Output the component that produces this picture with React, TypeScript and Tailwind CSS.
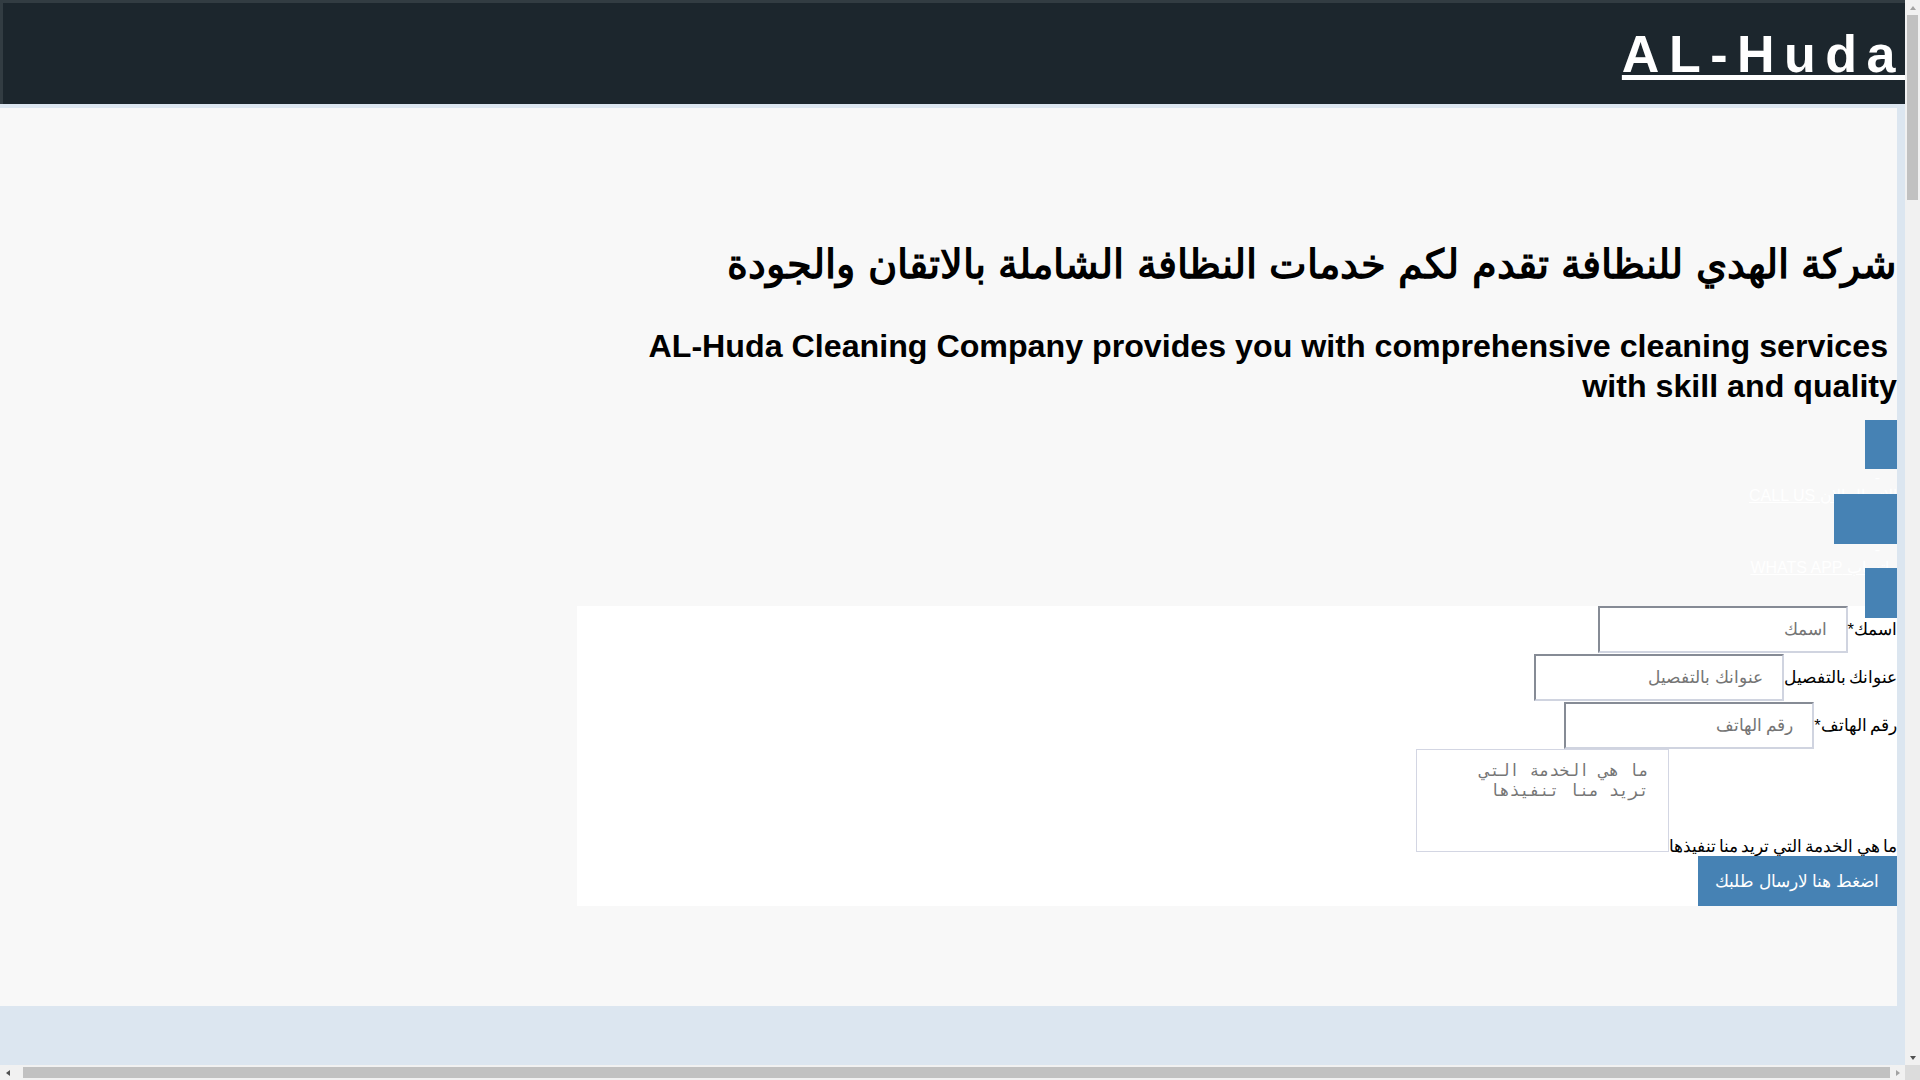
const fields = [
  { id: "name", label: "اسمك*", placeholder: "اسمك" },
  { id: "address", label: "عنوانك بالتفصيل", placeholder: "عنوانك بالتفصيل" },
  { id: "phone", label: "رقم الهاتف*", placeholder: "رقم الهاتف" },
];

const Arrow = ({ dir, active }: { dir: "up" | "down" | "left" | "right"; active: boolean }) => {
  const points = {
    up: "1,6 4,2 7,6",
    down: "1,2 4,6 7,2",
    left: "6,1 2,4 6,7",
    right: "2,1 6,4 2,7",
  }[dir];
  return (
    <div className="flex h-[15px] w-[15px] shrink-0 items-center justify-center">
      <svg width="8" height="8" viewBox="0 0 8 8">
        <polygon points={points} fill={active ? "#505050" : "#a3a3a3"} />
      </svg>
    </div>
  );
};

const ContactLinks = () => {
  return (
    <div className="flex flex-col items-start text-base leading-[18px] text-white">
      <div className="h-[49px] w-[32px] bg-[#4682b4]" />
      <div className="pr-[17px]">-</div>
      <a href="#" className="underline">
        الاتصال الان CALL US
      </a>
      <div className="-mt-[11px] -mb-[3px] h-[50px] w-[63px] bg-[#4682b4]" />
      <div className="pr-[17px]">-</div>
      <a href="#" className="underline">
        واتساب WHATS APP
      </a>
      <div className="relative z-10 -mt-[9px] h-[50px] w-[32px] bg-[#4682b4]" />
    </div>
  );
};

const OrderForm = () => {
  return (
    <form className="-mt-[12px] w-[1320px] bg-white text-base text-black" onSubmit={(e) => e.preventDefault()}>
      {fields.map((f) => (
        <div key={f.id} className="mb-px">
          <label htmlFor={f.id} className="text-[16.5px] leading-[19px] [word-spacing:-1.2px]">
            {f.label}
          </label>
          <input
            id={f.id}
            type="text"
            placeholder={f.placeholder}
            className="inline-block h-[47px] w-[250px] border-2 border-t-[#868b95] border-l-[#868b95] border-r-[#d0d4e0] border-b-[#d0d4e0] bg-white px-[19px] align-baseline text-[16.5px] leading-[19px] placeholder:text-[#757575]"
          />
        </div>
      ))}
      <div className="-mt-px h-[107px]">
        <label htmlFor="service" className="text-[16.5px] leading-[19px] [word-spacing:-1.2px]">
          ما هي الخدمة التي تريد منا تنفيذها
        </label>
        <textarea
          id="service"
          placeholder="ما هي الخدمة التي تريد منا تنفيذها"
          className="inline-block h-[103px] w-[253px] resize-none border border-[#d3d6e3] bg-white pt-[11px] pr-[19px] pb-[12px] pl-[19px] align-baseline font-['DejaVu_Sans_Mono',monospace] text-[16.5px] leading-[19.5px] placeholder:text-[#757575]"
        />
      </div>
      <button
        type="submit"
        className="h-[50px] w-[199px] whitespace-nowrap bg-[#4682b4] px-[18px] text-[16.5px] leading-[19px] text-white"
      >
        اضغط هنا لارسال طلبك
      </button>
    </form>
  );
};

export default function App() {
  return (
    <div className="flex h-[1080px] w-[1920px] overflow-hidden bg-[#f1f1f1] font-['Liberation_Sans',Arial,sans-serif]">
      <div className="flex w-[1905px] flex-col">
        {/* Page area */}
        <div className="h-[1065px] overflow-hidden bg-[#dce6f0]">
          <header className="border-t-[3px] border-l-[3px] border-[#323c42] bg-[#1c262d] pt-[21px] pb-[20px] text-right">
            <a href="#" className="text-[52px] font-bold leading-[60px] tracking-[9.5px] text-white underline">
              AL-Huda
            </a>
          </header>

          <main dir="rtl" className="mt-1 flex h-[898px] w-[1897px] flex-col items-start bg-[#f8f8f8] pt-[132px]">
            <h1 className="text-[40px] font-bold leading-[48px] text-black [word-spacing:1.3px]">
              شركة الهدي للنظافة تقدم لكم خدمات النظافة الشاملة بالاتقان والجودة
            </h1>
            <h2 className="mt-[38px] max-w-[1290px] text-[32.2px] font-bold leading-[40px] text-black">
              AL-Huda Cleaning Company provides you with comprehensive cleaning services{"\u00A0"} with skill and quality
            </h2>
            <div className="mt-[14px]">
              <ContactLinks />
            </div>
            <OrderForm />
          </main>
        </div>

        {/* Horizontal scrollbar */}
        <div className="flex h-[15px] items-center bg-[#f1f1f1]">
          <Arrow dir="left" active />
          <div className="ml-[8px] h-[11px] flex-1 bg-[#c1c1c1]" />
          <Arrow dir="right" active={false} />
        </div>
      </div>

      {/* Vertical scrollbar */}
      <div className="flex w-[15px] flex-col">
        <div className="flex h-[1065px] flex-col items-center bg-[#f1f1f1]">
          <Arrow dir="up" active={false} />
          <div className="h-[185px] w-[11px] bg-[#c1c1c1]" />
          <div className="flex-1" />
          <Arrow dir="down" active />
        </div>
        <div className="h-[15px] bg-[#dcdcdc]" />
      </div>
    </div>
  );
}
